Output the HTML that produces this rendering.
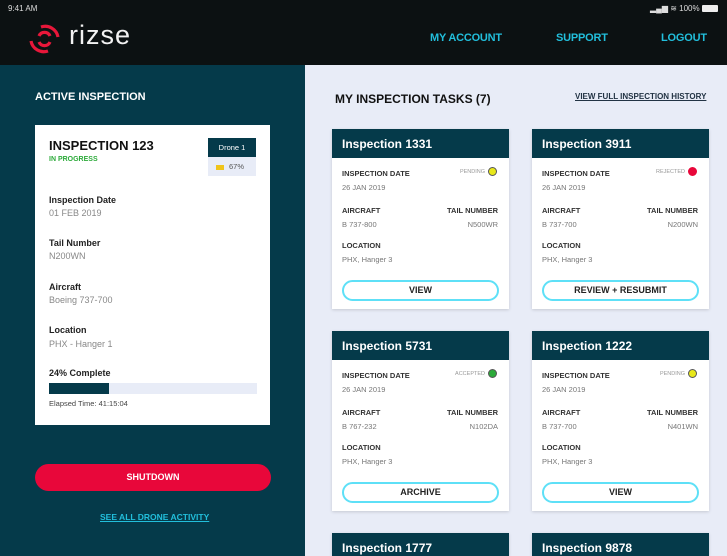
<!DOCTYPE html>
<html style="width:727px;height:556px;overflow:hidden"><head><meta charset="utf-8">
<style>
*{margin:0;padding:0;box-sizing:border-box}
body{width:727px;height:556px;overflow:hidden;position:relative;font-family:"Liberation Sans",sans-serif;background:#e8ecf7}
.a{position:absolute;white-space:nowrap}
#hdr{position:absolute;left:0;top:0;width:727px;height:65px;background:#0c1112}
#left{position:absolute;left:0;top:65px;width:305px;height:491px;background:#053a4a}
.nav{color:#22bfdc;font-weight:bold;font-size:11px;top:32px;letter-spacing:-0.2px}
.card{position:absolute;width:177px;height:180px;background:#fff;box-shadow:0 1px 3px rgba(0,0,0,.15);overflow:hidden}
.card .h{position:absolute;left:0;top:0;width:177px;height:29px;background:#053a4a;color:#fff;font-weight:bold;font-size:12px;padding:8px 0 0 10px}
.lb{position:absolute;font-size:7.5px;font-weight:bold;color:#333}
.vl{position:absolute;font-size:7.5px;color:#777}
.btn{position:absolute;left:10px;top:151px;width:157px;height:21px;border:2px solid #5ee0f7;border-radius:11px;text-align:center;font-size:9px;font-weight:bold;color:#222;line-height:17px}
.st{position:absolute;right:12px;top:38px;font-size:5.5px;color:#999}
.dot{display:inline-block;width:9px;height:9px;border-radius:50%;vertical-align:middle;margin-left:3px;border:1px solid #555}
.lL{font-size:9px;font-weight:bold;color:#222;left:14px}
.lV{font-size:9px;color:#888;left:14px}
</style></head><body>
<div id="hdr"></div>
<div class="a" style="left:8px;top:4px;color:#ddd;font-size:8px">9:41 AM</div>
<div class="a" style="left:650px;top:4px;color:#ddd;font-size:8px">▂▄▆ ≋ 100% <span style="display:inline-block;width:16px;height:7px;background:#eee;border-radius:1px;vertical-align:middle"></span></div>
<svg class="a" style="left:27px;top:22px" width="36" height="34" viewBox="0 0 36 34"><g fill="none" stroke="#e8173a" stroke-width="3.2"><path d="M14 5 A13 13 0 0 1 31 15"/><path d="M21 29 A13 13 0 0 1 4 19"/><path d="M12 14 A6 6 0 0 1 23 14"/><path d="M23 20 A6 6 0 0 1 12 20"/></g></svg>
<div class="a" style="left:69px;top:20px;color:#f2f2f2;font-size:27px;letter-spacing:1px">rizse</div>
<div class="a nav" style="left:430px">MY ACCOUNT</div>
<div class="a nav" style="left:556px">SUPPORT</div>
<div class="a nav" style="left:661px">LOGOUT</div>
<div id="left"></div>
<div class="a" style="left:35px;top:91px;color:#fff;font-weight:bold;font-size:11px">ACTIVE INSPECTION</div>
<div class="a" style="left:35px;top:125px;width:235px;height:300px;background:#fff">
 <div class="a" style="left:14px;top:13px;font-size:13px;font-weight:bold;color:#111">INSPECTION 123</div>
 <div class="a" style="left:14px;top:31px;font-size:7px;font-weight:bold;color:#2caa3a">IN PROGRESS</div>
 <div class="a" style="left:173px;top:13px;width:48px;height:19px;background:#053a4a;color:#fff;font-size:7.5px;text-align:center;line-height:19px">Drone 1</div>
 <div class="a" style="left:173px;top:32px;width:48px;height:19px;background:#e8ecf7;font-size:7.5px;color:#555;line-height:19px;padding-left:8px"><span style="display:inline-block;width:8px;height:5px;background:#f0c419;margin-right:5px;vertical-align:middle"></span>67%</div>
 <div class="a lL" style="top:70px">Inspection Date</div><div class="a lV" style="top:83px">01 FEB 2019</div>
 <div class="a lL" style="top:113px">Tail Number</div><div class="a lV" style="top:126px">N200WN</div>
 <div class="a lL" style="top:157px">Aircraft</div><div class="a lV" style="top:170px">Boeing 737-700</div>
 <div class="a lL" style="top:200px">Location</div><div class="a lV" style="top:214px">PHX - Hanger 1</div>
 <div class="a lL" style="top:243px">24% Complete</div>
 <div class="a" style="left:14px;top:258px;width:208px;height:11px;background:#e8ecf7"><div style="width:60px;height:11px;background:#053a4a"></div></div>
 <div class="a" style="left:14px;top:274px;font-size:7.5px;color:#444">Elapsed Time: 41:15:04</div>
</div>
<div class="a" style="left:35px;top:464px;width:236px;height:27px;background:#e8073a;border-radius:14px;color:#fff;font-size:9px;font-weight:bold;text-align:center;line-height:27px">SHUTDOWN</div>
<div class="a" style="left:100px;top:512px;color:#22bfdc;font-size:8.5px;font-weight:bold;text-decoration:underline">SEE ALL DRONE ACTIVITY</div>
<div class="a" style="left:335px;top:92px;color:#111;font-weight:bold;font-size:12px">MY INSPECTION TASKS (7)</div>
<div class="a" style="left:575px;top:92px;color:#234;font-weight:bold;font-size:8px;text-decoration:underline">VIEW FULL INSPECTION HISTORY</div>

<div class="card" style="left:332px;top:129px"><div class="h">Inspection 1331</div>
<div class="lb" style="left:10px;top:40px">INSPECTION DATE</div><div class="st">PENDING<span class="dot" style="background:#e8e81a"></span></div>
<div class="vl" style="left:10px;top:54px">26 JAN 2019</div>
<div class="lb" style="left:10px;top:77px">AIRCRAFT</div><div class="lb" style="right:11px;top:77px">TAIL NUMBER</div>
<div class="vl" style="left:10px;top:91px">B 737-800</div><div class="vl" style="right:11px;top:91px">N500WR</div>
<div class="lb" style="left:10px;top:112px">LOCATION</div><div class="vl" style="left:10px;top:126px">PHX, Hanger 3</div>
<div class="btn">VIEW</div></div>

<div class="card" style="left:532px;top:129px"><div class="h">Inspection 3911</div>
<div class="lb" style="left:10px;top:40px">INSPECTION DATE</div><div class="st">REJECTED<span class="dot" style="background:#e8073a;border-color:#e8073a"></span></div>
<div class="vl" style="left:10px;top:54px">26 JAN 2019</div>
<div class="lb" style="left:10px;top:77px">AIRCRAFT</div><div class="lb" style="right:11px;top:77px">TAIL NUMBER</div>
<div class="vl" style="left:10px;top:91px">B 737-700</div><div class="vl" style="right:11px;top:91px">N200WN</div>
<div class="lb" style="left:10px;top:112px">LOCATION</div><div class="vl" style="left:10px;top:126px">PHX, Hanger 3</div>
<div class="btn">REVIEW + RESUBMIT</div></div>

<div class="card" style="left:332px;top:331px"><div class="h">Inspection 5731</div>
<div class="lb" style="left:10px;top:40px">INSPECTION DATE</div><div class="st">ACCEPTED<span class="dot" style="background:#2caa3a"></span></div>
<div class="vl" style="left:10px;top:54px">26 JAN 2019</div>
<div class="lb" style="left:10px;top:77px">AIRCRAFT</div><div class="lb" style="right:11px;top:77px">TAIL NUMBER</div>
<div class="vl" style="left:10px;top:91px">B 767-232</div><div class="vl" style="right:11px;top:91px">N102DA</div>
<div class="lb" style="left:10px;top:112px">LOCATION</div><div class="vl" style="left:10px;top:126px">PHX, Hanger 3</div>
<div class="btn">ARCHIVE</div></div>

<div class="card" style="left:532px;top:331px"><div class="h">Inspection 1222</div>
<div class="lb" style="left:10px;top:40px">INSPECTION DATE</div><div class="st">PENDING<span class="dot" style="background:#e8e81a"></span></div>
<div class="vl" style="left:10px;top:54px">26 JAN 2019</div>
<div class="lb" style="left:10px;top:77px">AIRCRAFT</div><div class="lb" style="right:11px;top:77px">TAIL NUMBER</div>
<div class="vl" style="left:10px;top:91px">B 737-700</div><div class="vl" style="right:11px;top:91px">N401WN</div>
<div class="lb" style="left:10px;top:112px">LOCATION</div><div class="vl" style="left:10px;top:126px">PHX, Hanger 3</div>
<div class="btn">VIEW</div></div>

<div class="card" style="left:332px;top:533px;height:23px"><div class="h">Inspection 1777</div></div>
<div class="card" style="left:532px;top:533px;height:23px"><div class="h">Inspection 9878</div></div>
</body></html>
